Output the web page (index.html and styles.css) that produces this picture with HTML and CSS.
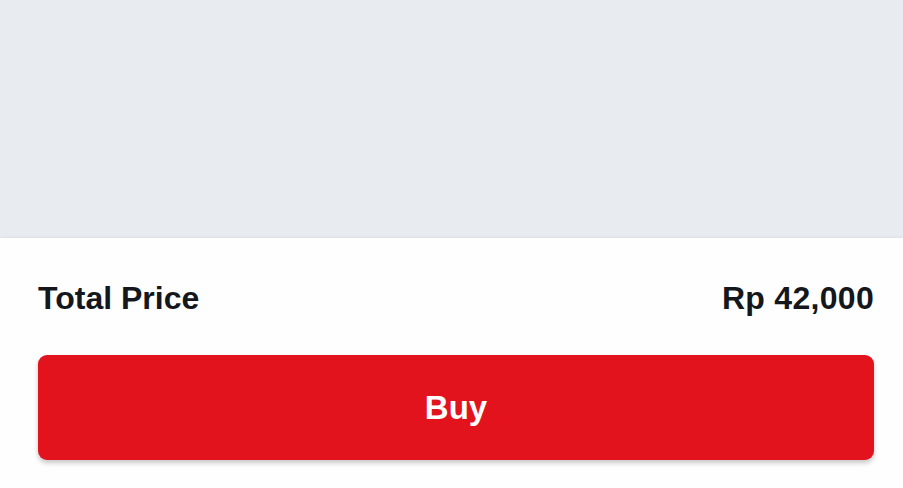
FILE: index.html
```html
<!DOCTYPE html>
<html lang="en">

<head>
  <meta charset="UTF-8">
  <meta name="viewport" content="width=device-width, initial-scale=1.0">
  <title>Checkout</title>
  <link rel="stylesheet" href="styles.css">
</head>

<body>
  <div class="content"></div>

  <div class="checkout-bar">
    <div class="total-row">
      <span class="total-label">Total Price</span>
      <span class="total-value">Rp 42,000</span>
    </div>
    <button class="buy-button">Buy</button>
  </div>
</body>

</html>
```

FILE: styles.css
```css
body {
  font-family: "Liberation Sans", Arial, sans-serif;
  margin: 0;
  width: 903px;
  height: 488px;
  overflow: hidden;
  background-color: #e8ebf0;
  color: #14171c;
}

.content {
  height: 238px;
  background-color: #e8ebf0;
}

.checkout-bar {
  background-color: #fefefe;
  padding: 42px 29px 0 38px;
  height: 250px;
  box-sizing: border-box;
  box-shadow: 0 -1px 3px rgba(0, 0, 0, 0.05);
}

.total-row {
  display: flex;
  align-items: center;
  justify-content: space-between;
  font-size: 32px;
  line-height: 36px;
  font-weight: 700;
}

.total-value {
  letter-spacing: 0.3px;
}

.buy-button {
  display: block;
  width: 100%;
  height: 105px;
  margin-top: 39px;
  border: none;
  border-radius: 9px;
  background-color: #e3131e;
  color: #fff;
  font-family: inherit;
  font-size: 33px;
  font-weight: 700;
  box-shadow: 0 3px 5px rgba(0, 0, 0, 0.22);
  cursor: pointer;
}
```
